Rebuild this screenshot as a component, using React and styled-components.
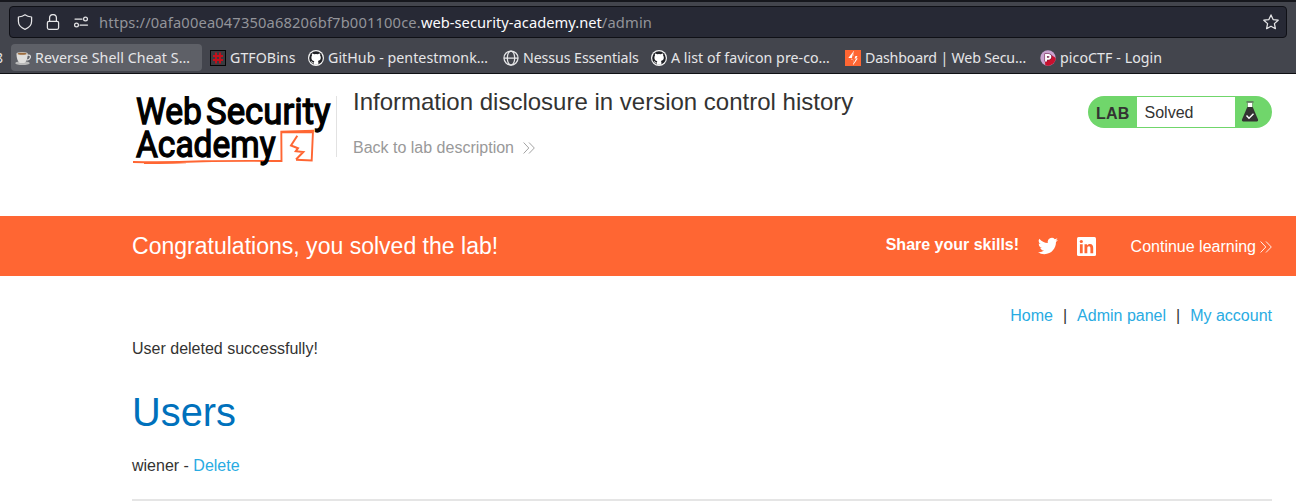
import React from 'react';
import styled, { createGlobalStyle } from 'styled-components';

const GlobalStyle = createGlobalStyle`
  * { box-sizing: border-box; }
  html, body { margin: 0; background: #fff; overflow: hidden; }
  body { font: 16px/24px "Liberation Sans", Arial, sans-serif; color: #333332; }
  svg { display: block; flex: none; }
`;

const Page = styled.div`height: 503px; overflow: hidden;`;

/* ---------- browser chrome ---------- */
const Chrome = styled.header`
  height: 74px;
  padding-top: 4px;
  background: #43454d;
  border-top: 2px solid #16171d;
  border-bottom: 1px solid #0f1014;
  font-family: "Noto Sans", sans-serif;
`;
const UrlBar = styled.div`
  height: 32px;
  margin: 0 9px;
  padding: 0 7px 0 8px;
  display: flex;
  align-items: center;
  background: #272935;
  border: 1px solid #0f1016;
  border-radius: 4px;
`;
const BarIcons = styled.div`display: flex; gap: 12px; margin-right: 10px; margin-left: -1px;`;
const Url = styled.div`
  flex: 1;
  font-size: 14.7px;
  line-height: 30px;
  letter-spacing: 0.15px;
  color: #93949a;
  white-space: nowrap;
`;
const Host = styled.span`color: #fbfbfe; letter-spacing: 0.02px;`;
const Bookmarks = styled.nav`display: flex; gap: 4px; padding-top: 6px; height: 34px;`;
const Clipped = styled.div`
  width: 7px;
  height: 27px;
  display: flex;
  justify-content: flex-end;
  overflow: hidden;
  color: #e6e6e8;
  font-size: 14px;
  line-height: 27px;
  padding-right: 4px;
`;
const Bookmark = styled.div`
  width: ${p => p.$width}px;
  height: 27px;
  flex: none;
  display: flex;
  align-items: center;
  gap: 4px;
  padding: 0 4px;
  border-radius: 4px;
  background: ${p => (p.$active ? '#5e6067' : 'transparent')};
`;
const BookmarkLabel = styled.span`
  font-size: 14.2px;
  line-height: 27px;
  letter-spacing: ${p => p.$spacing || 0}px;
  color: #e6e6e8;
  white-space: nowrap;
`;

const Line = ({ children, size = 16 }) => (
  <svg width={size} height={size} viewBox="0 0 16 16" fill="none" stroke="#e6e6e8" strokeWidth="1.25" strokeLinecap="round" strokeLinejoin="round">{children}</svg>
);
const Shield = () => <Line><path d="M8 .8C6.2 2.2 4 2.8 1.4 3v4.300c0 3.800 2.700 6.600 6.600 8 3.900-1.400 6.600-4.200 6.600-8V3C12 2.800 9.800 2.200 8 .8Z" /></Line>;
const Lock = () => <Line><rect x="2.400" y="7.300" width="11.200" height="8" rx="1.500" /><path d="M4.600 7.300V4a3.400 3.400 0 0 1 6.800 0v3.300" /></Line>;
const Permissions = () => <Line><circle cx="12.500" cy="5" r="1.900" /><path d="M2 5h7M7 11h7.500" /><circle cx="3.500" cy="11" r="1.900" /></Line>;
const Star = () => <Line><path d="m8 .9 2.100 4.700 5.100.6-3.800 3.400 1 5.100L8 12.200l-4.400 2.500 1-5.100L.8 6.200l5.100-.6Z" /></Line>;
const Globe = () => <Line><circle cx="8" cy="8" r="7" /><ellipse cx="8" cy="8" rx="3.700" ry="7" /><path d="M1.300 8h13.400" /></Line>;
const Cup = () => (
  <svg width="16" height="16" viewBox="0 0 16 16">
    <ellipse cx="7.500" cy="13.200" rx="7.200" ry="1.900" fill="#b9b9b9" />
    <path d="M12 5.200h1.800c1.600 0 1.900 1.300 1.400 2.600-.5 1.400-1.700 2.300-3.500 2.400" fill="none" stroke="#d8d8d8" strokeWidth="1.300" />
    <path d="M1.500 3.700h11.200c0 4.500-.9 7.500-3.300 9.300H4.800C2.400 11.200 1.500 8 1.500 3.700Z" fill="#e0dfdd" />
    <ellipse cx="7.100" cy="3.600" rx="5.600" ry="1.600" fill="#d6d2cc" /><ellipse cx="7.100" cy="3.700" rx="4.400" ry="1" fill="#9c6b3c" />
  </svg>
);
const Hash = () => (
  <svg width="16" height="16" viewBox="0 0 16 16">
    <rect width="16" height="16" fill="#050505" /><rect x="1" y="1" width="14" height="14" fill="#3b3b40" />
    <path d="M6 2.500v11M10 2.500v11M3 6h10M3 10h10" stroke="#c4101b" strokeWidth="1.900" />
  </svg>
);
const Github = () => (
  <svg width="16" height="16" viewBox="0 0 16 16">
    <circle cx="8" cy="8" r="8" fill="#f4f4f4" /><circle cx="8" cy="8" r="6.800" fill="#202126" />
    <path d="M4 3.500c.9 0 1.600.4 2.200.8a8 8 0 0 1 3.600 0c.6-.4 1.300-.8 2.200-.8.3.8.3 1.400.1 2 .6.7.8 1.500.7 2.500-.2 1.800-1.200 2.600-2.900 2.900.4.500.5 1 .5 1.700v2.200H5.800v-1.500c-1.500.3-1.900-.5-2.300-1.100-.2-.4-.5-.6-.8-.8.8-.3 1.300.2 1.800.8.3.5.8.6 1.400.4 0-.6.2-1 .4-1.400-1.700-.3-2.800-1.300-2.900-3.200-.1-.9.200-1.800.6-2.400-.2-.7-.2-1.300 0-2.100Z" fill="#fff" />
  </svg>
);
const Bolt = () => (
  <svg width="16" height="16" viewBox="0 0 16 16"><rect width="16" height="16" fill="#ff6633" /><path d="M8.500 1v5h4L8 14.500v-5l-1.500-.3.600-2.200ZM8.800 1 3.300 8h4L6 9.800h2.200V15L12.800 8.500H9.500L10.500 6H8.800Z" fill="#fff" /></svg>
);
const Pico = () => (
  <svg width="16" height="16" viewBox="0 0 16 16">
    <circle cx="8" cy="8" r="7.700" fill="#c9a2cf" /><path d="M15.700 8A7.700 7.700 0 0 1 5.300 15.200L5 12l5-4 1.500-3Z" fill="#c8102e" />
    <path d="M6 11.500V5h2.500a1.700 1.700 0 0 1 0 3.700H6" fill="none" stroke="#6b1238" strokeWidth="2.900" /><path d="M6 11.500V5h2.500a1.700 1.700 0 0 1 0 3.700H6" fill="none" stroke="#fff" strokeWidth="1.900" />
  </svg>
);

const bookmarks = [
  { icon: Cup, label: 'Reverse Shell Cheat S…', width: 191, active: true, spacing: 0.08 },
  { icon: Hash, label: 'GTFOBins', width: 94, spacing: 0.05 },
  { icon: Github, label: 'GitHub - pentestmonk…', width: 191, spacing: 0.05 },
  { icon: Globe, label: 'Nessus Essentials', width: 144, spacing: -0.08 },
  { icon: Github, label: 'A list of favicon pre-co…', width: 190, spacing: 0.04 },
  { icon: Bolt, label: 'Dashboard | Web Secu…', width: 191, spacing: -0.17 },
  { icon: Pico, label: 'picoCTF - Login', width: 130, spacing: 0.07 },
];

/* ---------- lab header ---------- */
const LabHeader = styled.section`
  height: 142px;
  padding: 14px 24px 0 132px;
  display: flex;
  align-items: flex-start;
`;
const LogoBox = styled.div`
  width: 205px;
  height: 61px;
  margin-top: 8px;
  border-right: 1px solid #e2e2e2;
`;
const TitleBlock = styled.div`flex: 1; padding-left: 16px;`;
const Title = styled.h2`margin: 0; font-size: 24px; line-height: 28px; font-weight: 400;`;
const BackLink = styled.a`
  display: flex;
  align-items: center;
  gap: 9px;
  margin-top: 20px;
  color: #999;
`;
const Status = styled.div`
  width: 184px;
  height: 32px;
  margin-top: 8px;
  display: flex;
  align-items: center;
  border-radius: 16px;
  background: #70d66b;
`;
const StatusTag = styled.b`width: 49px; padding: 3px 0 0 8px; letter-spacing: 0.2px;`;
const StatusText = styled.span`
  width: 98px;
  height: 30px;
  padding-left: 7.500px;
  line-height: 31px;
  background: #fff;
`;
const StatusIcon = styled.span`padding: 0 0 1px 6px;`;

const Logo = () => (
  <svg width="200" height="74" viewBox="0 0 200 74">
    <path d="M1 66c23 .6 48 .2 70-.7 26-.6 53-.4 78.500-.3L149.300 35.700 181 34.700 179.700 64.500 164 63.800M12 67c15 .3 29 .2 42-.6M150 36.300l30-.2" fill="none" stroke="#ff6633" strokeWidth="1.900" />
    <path d="M165.300 39.700 159 49.500l7 2.700-2.200 3 7.500.8L164 63.500" fill="none" stroke="#ff6633" strokeWidth="2" />
    <g fill="#000" stroke="#000" strokeWidth="1.300" fontFamily="Roboto, sans-serif" fontWeight="400" fontSize="36.500">
      <text x="4" y="28" textLength="66" lengthAdjust="spacingAndGlyphs">Web</text>
      <text x="74" y="28" textLength="124.500" lengthAdjust="spacingAndGlyphs">Security</text>
      <text x="4" y="61" textLength="139.500" lengthAdjust="spacingAndGlyphs">Academy</text>
    </g>
  </svg>
);
const Chevrons = ({ color }) => (
  <svg width="12" height="12" viewBox="0 0 12 12" fill="none" stroke={color} strokeWidth=".9"><path d="m.6.5 5.200 5.500L.6 11.500M6 .5 11.300 6 6 11.500" /></svg>
);
const Flask = () => (
  <svg width="18" height="21" viewBox="0 0 18 21">
    <path d="M6.500 1.500h5v5h-5Z" fill="#fff" /><path d="M5.500 1h7" stroke="#555" strokeWidth="1.300" />
    <path d="M6.500 1.500v4.500M11.500 1.500v4.500" stroke="#6d9b6a" strokeWidth=".8" />
    <path d="M6.300 6h5.400L17 18.500c.3 1.200-.2 2-1.200 2H2.200c-1 0-1.500-.8-1.200-2Z" fill="#333332" />
    <path d="m5.500 14.500 2.500 2.700 4.500-4.500" fill="none" stroke="#fff" strokeWidth="1.400" />
  </svg>
);

/* ---------- congratulation banner ---------- */
const Banner = styled.section`
  height: 60px;
  padding: 0 24px 0 132px;
  display: flex;
  align-items: center;
  background: #ff6633;
  color: #fff;
`;
const BannerTitle = styled.h4`flex: 1; margin: 0; font-size: 23.040px; font-weight: 400;`;
const Share = styled.div`display: flex; align-items: center; font-weight: 700; margin-right: 34.500px;`;
const ShareText = styled.span`margin: -3px 19px 0 0;`;
const SocialIcons = styled.div`display: flex; align-items: center; gap: 19px;`;
const Continue = styled.a`display: flex; align-items: center; gap: 4px; padding-top: 1px;`;

const Twitter = () => (
  <svg width="20" height="20" viewBox="0 0 24 24" fill="#fff"><path d="M23.950 4.570a10 10 0 0 1-2.820.77 4.960 4.960 0 0 0 2.160-2.720c-.95.550-2 .95-3.130 1.180a4.920 4.920 0 0 0-8.380 4.480C7.690 8.090 4.070 6.130 1.640 3.160a4.920 4.920 0 0 0 1.520 6.570 4.900 4.900 0 0 1-2.230-.61v.06a4.920 4.920 0 0 0 3.950 4.830 5 5 0 0 1-2.210.08 4.940 4.940 0 0 0 4.600 3.420A9.870 9.870 0 0 1 0 19.540a14 14 0 0 0 7.550 2.210c9.050 0 14-7.500 14-13.980l-.02-.64a10 10 0 0 0 2.420-2.560Z" /></svg>
);
const LinkedIn = () => (
  <svg width="19" height="19" viewBox="0 0 19 19"><rect width="19" height="19" rx="1.500" fill="#fff" /><g fill="#ff6633"><circle cx="4.300" cy="4.500" r="1.600" /><path d="M2.900 7.200h2.800v9H2.900zM7.500 7.200h2.600v1.200c.5-.9 1.500-1.500 2.800-1.500 2.600 0 3.300 1.700 3.300 4.200v5.100h-2.800v-4.600c0-1.300-.2-2.300-1.500-2.300-1.200 0-1.600.9-1.600 2.200v4.700H7.500z" /></g></svg>
);

/* ---------- admin page ---------- */
const Content = styled.main`padding: 28px 24px 0 132px;`;
const TopLinks = styled.nav`display: flex; justify-content: flex-end; gap: 10px;`;
const Link = styled.a`color: #29abe2;`;
const Message = styled.p`margin: 9px 0 0;`;
const Heading = styled.h1`margin: 27px 0 0; font-size: 39.800px; line-height: 48px; font-weight: 400; color: #0071bc;`;
const UserRow = styled.div`margin-top: 18px;`;
const Rule = styled.hr`margin: 21px 0 0; border: 0; height: 2px; background: #e5e5e5;`;

export default function App() {
  return (
    <Page>
      <GlobalStyle />
      <Chrome>
        <UrlBar>
          <BarIcons><Shield /><Lock /><Permissions /></BarIcons>
          <Url>https://0afa00ea047350a68206bf7b001100ce.<Host>web-security-academy.net</Host>/admin</Url>
          <Star />
        </UrlBar>
        <Bookmarks>
          <Clipped>8</Clipped>
          {bookmarks.map(({ icon: Icon, label, width, active, spacing }) => (
            <Bookmark key={label} $width={width} $active={active}>
              <Icon /><BookmarkLabel $spacing={spacing}>{label}</BookmarkLabel>
            </Bookmark>
          ))}
        </Bookmarks>
      </Chrome>
      <LabHeader>
        <LogoBox><Logo /></LogoBox>
        <TitleBlock>
          <Title>Information disclosure in version control history</Title>
          <BackLink>Back to lab description <Chevrons color="#999" /></BackLink>
        </TitleBlock>
        <Status>
          <StatusTag>LAB</StatusTag>
          <StatusText>Solved</StatusText>
          <StatusIcon><Flask /></StatusIcon>
        </Status>
      </LabHeader>
      <Banner>
        <BannerTitle>Congratulations, you solved the lab!</BannerTitle>
        <Share>
          <ShareText>Share your skills!</ShareText>
          <SocialIcons><Twitter /><LinkedIn /></SocialIcons>
        </Share>
        <Continue>Continue learning <Chevrons color="#fff" /></Continue>
      </Banner>
      <Content>
        <TopLinks><Link>Home</Link><span>|</span><Link>Admin panel</Link><span>|</span><Link>My account</Link></TopLinks>
        <Message>User deleted successfully!</Message>
        <Heading>Users</Heading>
        <UserRow>wiener - <Link>Delete</Link></UserRow>
        <Rule />
      </Content>
    </Page>
  );
}
